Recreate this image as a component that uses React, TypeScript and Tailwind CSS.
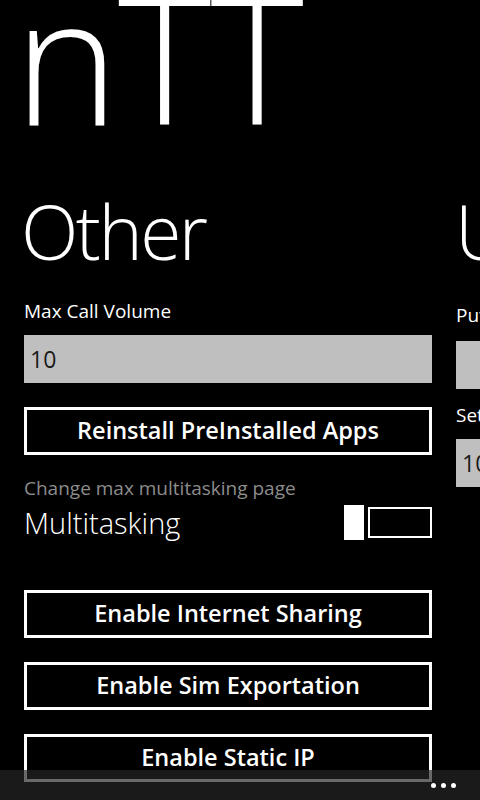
import React from 'react';

const font = { fontFamily: '"Open Sans", "Noto Sans", sans-serif' };

const OutlineButton: React.FC<{ label: string; className?: string }> = ({ label, className }) => (
    <button
        className={`w-[408px] h-[48px] border-[3px] border-white bg-black text-white text-[23.5px] font-semibold flex items-center justify-center ${className ?? ''}`}
    >
        {label}
    </button>
);

const TextBox: React.FC<{ value?: string; className?: string }> = ({ value, className }) => (
    <div className={`h-[48px] bg-[#bfbfbf] flex items-center pl-[6px] text-[23px] text-[#1a1a1a] ${className ?? ''}`}>
        {value}
    </div>
);

export default function App() {
    return (
        <div className="relative w-[480px] h-[800px] overflow-hidden bg-black text-white" style={font}>
            {/* Pivot title */}
            <div className="mt-[-33px] pl-[14px] text-[178px] leading-none font-light tracking-[-1px] whitespace-nowrap">
                nTT
            </div>

            {/* Pivot items */}
            <div className="mt-[49px] flex gap-[24px] pl-[24px]">
                {/* Other */}
                <div className="w-[408px] shrink-0">
                    <h2 className="text-[75px] leading-none font-light -ml-[3px] tracking-[-2.5px]">Other</h2>

                    <div className="mt-[28px] text-[19px] leading-[28px]">Max Call Volume</div>
                    <TextBox value="10" className="mt-[10px] w-[408px]" />

                    <OutlineButton label="Reinstall PreInstalled Apps" className="mt-[24px]" />

                    <div className="mt-[20px] text-[19px] leading-[26px] text-[#8c8c8c]">Change max multitasking page</div>
                    <div className="flex items-center justify-between h-[42px]">
                        <span className="text-[29px] font-light leading-none">Multitasking</span>
                        <div className="flex items-center gap-[4px]">
                            <div className="w-[20px] h-[35px] bg-white" />
                            <div className="w-[64px] h-[31px] border-2 border-white" />
                        </div>
                    </div>

                    <div className="mt-[47px] flex flex-col gap-[24px]">
                        <OutlineButton label="Enable Internet Sharing" />
                        <OutlineButton label="Enable Sim Exportation" />
                        <OutlineButton label="Enable Static IP" />
                    </div>
                </div>

                {/* Next pivot item peeking in */}
                <div className="w-[408px] shrink-0">
                    <h2 className="text-[75px] leading-none font-light ml-[-1px]">UI</h2>
                    <div className="mt-[32px] text-[19px] leading-[28px]">Put</div>
                    <TextBox className="mt-[12px]" />
                    <div className="mt-[12px] text-[19px] leading-[28px]">Set</div>
                    <TextBox value="10" className="mt-[10px]" />
                </div>
            </div>

            {/* Application bar */}
            <div className="absolute left-0 right-0 bottom-0 h-[30px] bg-[rgba(37,37,37,0.69)] flex justify-end items-start pr-[24px] pt-[13px]">
                <div className="flex gap-[5px]">
                    <span className="w-[5px] h-[5px] rounded-full bg-white" />
                    <span className="w-[5px] h-[5px] rounded-full bg-white" />
                    <span className="w-[5px] h-[5px] rounded-full bg-white" />
                </div>
            </div>
        </div>
    );
}
